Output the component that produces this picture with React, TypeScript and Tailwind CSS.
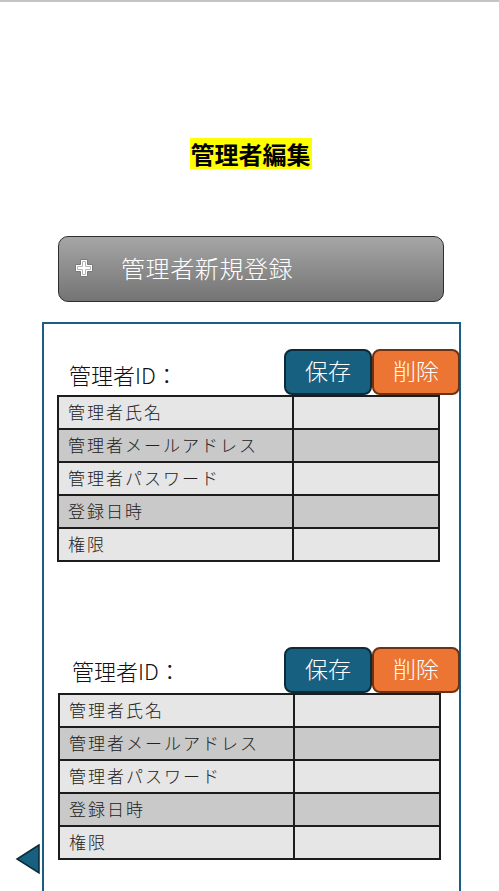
const rows = ["管理者氏名", "管理者メールアドレス", "管理者パスワード", "登録日時", "権限"];

const AdminBlock = ({ labelCls, tableMl }: { labelCls: string; tableMl: string }) => (
  <div>
    <div className="flex items-end justify-between h-[46px]">
      <span className={`text-[22px] font-light leading-[30px] text-[#111] ${labelCls}`}>管理者ID：</span>
      <div className="flex h-[46px] mr-[-1px]">
        <button className="w-[88px] h-[46px] rounded-[8px] border-2 border-[#0d2a36] bg-[#17607f] text-white text-[23px] font-light leading-none pb-[4px]">
          保存
        </button>
        <button className="w-[88px] h-[46px] rounded-[8px] border-2 border-[#6b3216] bg-[#ec7533] text-white text-[23px] font-light leading-none pb-[4px]">
          削除
        </button>
      </div>
    </div>
    <table className={`w-[383px] border-collapse border-2 border-[#1c1c1c] ${tableMl}`}>
      <tbody>
        {rows.map((r, i) => (
          <tr key={r} className={i % 2 === 0 ? "bg-[#e6e6e6]" : "bg-[#c9c9c9]"}>
            <td className="w-[235px] h-[33px] border-2 border-[#1c1c1c] pl-[9px] pb-[2px] text-[17px] font-light tracking-[2px] text-[#222] leading-none">
              {r}
            </td>
            <td className="h-[33px] border-2 border-[#1c1c1c]"></td>
          </tr>
        ))}
      </tbody>
    </table>
  </div>
);

export default function App() {
  return (
    <div
      className="relative w-[499px] h-[891px] overflow-hidden bg-white border-t-2 border-[#c4c4c4]"
      style={{ fontFamily: '"Noto Sans CJK JP", "Noto Sans", sans-serif' }}
    >
      <div className="flex justify-center pt-[136px] pl-[2px]">
        <h1 className="bg-[#ffff00] text-[24px] font-bold leading-[31px] px-[1px] text-black">管理者編集</h1>
      </div>

      <div className="ml-[58px] mt-[67px] w-[386px] h-[66px] rounded-[10px] border border-[#2e2e2e] bg-gradient-to-b from-[#a6a6a6] to-[#747474] flex items-center">
        <svg width="20" height="20" viewBox="0 0 20 20" className="ml-[15px] mt-[-2px]">
          <path d="M6.5 1.5h7v5h5v7h-5v5h-7v-5h-5v-7h5z" fill="#ffffff" stroke="#7a7a7a" strokeWidth="1" />
          <path d="M8.5 3.5h3v5h5v3h-5v5h-3v-5h-5v-3h5z" fill="none" stroke="#b5b5b5" strokeWidth="1" />
        </svg>
        <span className="ml-[27px] text-white text-[24px] font-light tracking-[0.6px] pb-[3px]">管理者新規登録</span>
      </div>

      <div className="ml-[42px] mt-[20px] w-[419px] h-[600px] border-t-2 border-l-2 border-r-2 border-[#1a5f80] pt-[25px]">
        <AdminBlock labelCls="pl-[25px] pb-[6px]" tableMl="ml-[13px]" />
        <div className="h-[85px]"></div>
        <AdminBlock labelCls="pl-[28px] pb-[8px]" tableMl="ml-[14px]" />
      </div>

      <svg width="26" height="32" viewBox="0 0 26 32" className="absolute left-[15px] top-[841px]">
        <path d="M24 2 L2 16 L24 30 Z" fill="#17607f" stroke="#0b2a38" strokeWidth="1.5" />
      </svg>
    </div>
  );
}
